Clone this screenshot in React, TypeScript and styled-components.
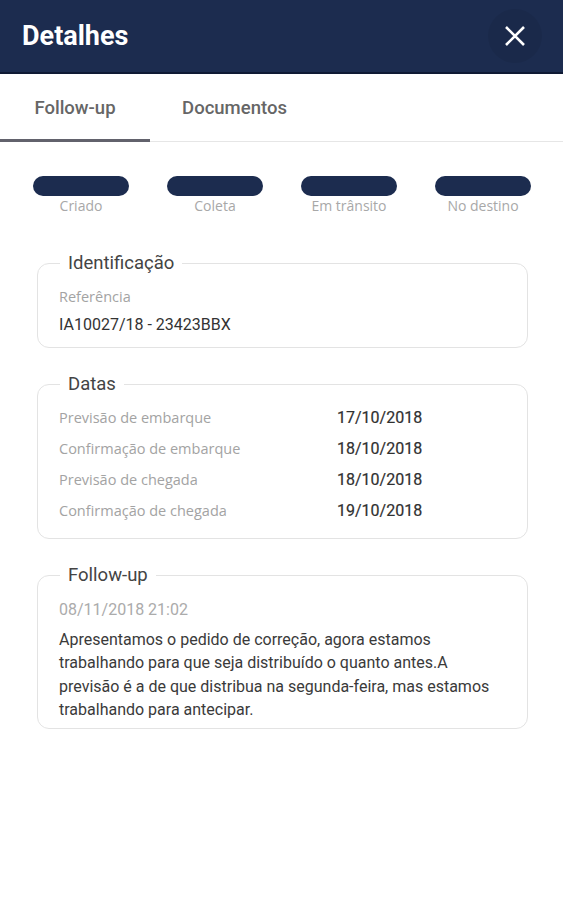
import { FC, Fragment } from "react";
import styled, { createGlobalStyle } from "styled-components";

const GlobalStyle = createGlobalStyle`
  body {
    margin: 0;
    background: #ffffff;
    font-family: Roboto, "Liberation Sans", sans-serif;
  }
`;

const navy = "#1c2c4f";

const Header = styled.header`
  height: 72px;
  background: ${navy};
  border-bottom: 2px solid #0f1a34;
  display: flex;
  align-items: center;
  justify-content: space-between;
  padding: 0 21px 0 22px;
`;

const Title = styled.h1`
  margin: 0;
  color: #ffffff;
  font-size: 27px;
  font-weight: 700;
`;

const CloseButton = styled.button`
  width: 54px;
  height: 54px;
  border: 0;
  border-radius: 50%;
  background: rgba(0, 0, 0, 0.06);
  display: flex;
  align-items: center;
  justify-content: center;
  padding: 0;
  cursor: pointer;
`;

const TabBar = styled.nav`
  height: 67px;
  display: flex;
  border-bottom: 1px solid #e6e6e6;
`;

const Tab = styled.div<{ $active?: boolean; $width: number }>`
  width: ${(p) => p.$width}px;
  display: flex;
  align-items: center;
  justify-content: center;
  font-size: 18.5px;
  font-weight: 500;
  color: #666666;
  box-shadow: ${(p) => (p.$active ? "inset 0 -3px 0 #62626c" : "none")};
  margin-bottom: -1px;
`;

const Steps = styled.div`
  display: flex;
  justify-content: space-between;
  padding: 0 32px 0 33px;
  margin-top: 34px;
`;

const Step = styled.div`
  display: flex;
  flex-direction: column;
  align-items: center;
  width: 96px;
`;

const Pill = styled.div`
  width: 96px;
  height: 20px;
  border-radius: 10px;
  background: ${navy};
`;

const StepLabel = styled.span`
  margin-top: 2px;
  line-height: 16px;
  font-family: "Open Sans", sans-serif;
  font-size: 14px;
  color: #a8a8a8;
`;

const Content = styled.main`
  display: flex;
  flex-direction: column;
  gap: 26px;
  padding: 0 35px 0 37px;
  margin-top: 39px;
`;

const Card = styled.fieldset<{ $bottom: number }>`
  margin: 0;
  min-width: 0;
  border: 1px solid #e3e3e3;
  border-radius: 12px;
  padding: 0 20px ${(p) => p.$bottom}px 21px;
`;

const Legend = styled.legend`
  margin-left: 1px;
  padding: 0 8px;
  font-size: 18.5px;
  line-height: 20px;
  color: #444444;
`;

const Body = styled.div<{ $top: number }>`
  margin-top: ${(p) => p.$top}px;
`;

const Label = styled.div<{ $height: number }>`
  font-family: "Open Sans", sans-serif;
  font-size: 14.5px;
  line-height: ${(p) => p.$height}px;
  color: #a3a3a3;
`;

const Value = styled.div<{ $height: number }>`
  font-size: 16px;
  line-height: ${(p) => p.$height}px;
  color: #333333;
`;

const DateGrid = styled.div`
  display: grid;
  grid-template-columns: 278px 1fr;
`;

const DateValue = styled(Value)`
  color: #303030;
  -webkit-text-stroke: 0.2px #303030;
`;

const Timestamp = styled.div`
  font-size: 16px;
  line-height: 22px;
  color: #ababab;
`;

const Message = styled.p`
  margin: 7px 0 0;
  font-size: 16px;
  line-height: 23.3px;
  color: #3a3a3a;
`;

const CloseIcon: FC = () => (
  <svg width="22" height="22" viewBox="0 0 22 22">
    <path d="M2 2 L20 20 M20 2 L2 20" stroke="#ffffff" strokeWidth="2.6" fill="none" />
  </svg>
);

const steps = ["Criado", "Coleta", "Em trânsito", "No destino"];

const dates = [
  ["Previsão de embarque", "17/10/2018"],
  ["Confirmação de embarque", "18/10/2018"],
  ["Previsão de chegada", "18/10/2018"],
  ["Confirmação de chegada", "19/10/2018"],
];

const App: FC = () => {
  return (
    <>
      <GlobalStyle />
      <Header>
        <Title>Detalhes</Title>
        <CloseButton aria-label="Fechar">
          <CloseIcon />
        </CloseButton>
      </Header>
      <TabBar>
        <Tab $active $width={150}>
          Follow-up
        </Tab>
        <Tab $width={169}>Documentos</Tab>
      </TabBar>
      <Steps>
        {steps.map((s) => (
          <Step key={s}>
            <Pill />
            <StepLabel>{s}</StepLabel>
          </Step>
        ))}
      </Steps>
      <Content>
        <Card $bottom={8}>
          <Legend>Identificação</Legend>
          <Body $top={10}>
            <Label $height={28}>Referência</Label>
            <Value $height={28}>IA10027/18 - 23423BBX</Value>
          </Body>
        </Card>
        <Card $bottom={12}>
          <Legend>Datas</Legend>
          <Body $top={8}>
            <DateGrid>
              {dates.map(([label, value]) => (
                <Fragment key={label}>
                  <Label $height={31}>{label}</Label>
                  <DateValue $height={31}>{value}</DateValue>
                </Fragment>
              ))}
            </DateGrid>
          </Body>
        </Card>
        <Card $bottom={7}>
          <Legend>Follow-up</Legend>
          <Body $top={14}>
            <Timestamp>08/11/2018 21:02</Timestamp>
            <Message>
              Apresentamos o pedido de correção, agora estamos trabalhando para que seja
              distribuído o quanto antes.A previsão é a de que distribua na segunda-feira,
              mas estamos trabalhando para antecipar.
            </Message>
          </Body>
        </Card>
      </Content>
    </>
  );
};

export default App;
